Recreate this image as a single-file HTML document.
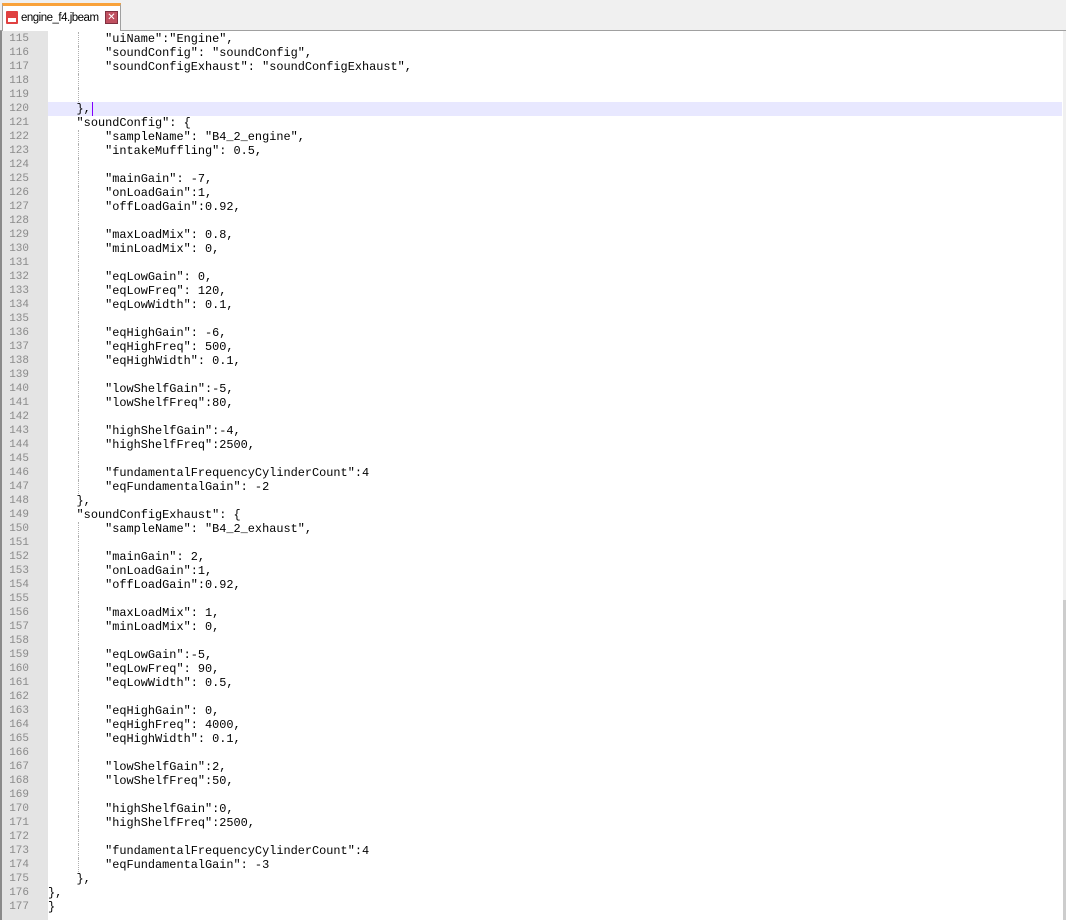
<!DOCTYPE html>
<html><head><meta charset="utf-8"><style>
*{margin:0;padding:0;box-sizing:border-box}
body{width:1066px;height:920px;overflow:hidden;background:#fff;position:relative;font-family:"Liberation Mono",monospace}
#tabbar{position:absolute;left:0;top:0;width:1066px;height:31px;background:#f0f0f0;border-bottom:1px solid #a0a0a0}
#tab{position:absolute;left:2px;top:3px;width:119px;height:28px;background:#fff;border:1px solid #a0a0a0;border-bottom:none;border-top:3px solid #f9a23a;font:11.5px "Liberation Sans",sans-serif;color:#000}
#tab .ic{position:absolute;left:3px;top:5px;width:12px;height:13px;background:#e04040;border-radius:1px}
#tab .ic:after{content:"";position:absolute;left:2px;top:7px;width:8px;height:4px;background:#fff}
#tab .t{position:absolute;left:18px;top:6px;letter-spacing:-0.5px}
#tab .x{position:absolute;left:102px;top:5px;width:13px;height:13px;background:#c05060;color:#fff;font-size:10px;line-height:12px;text-align:center;border:1px solid #803040}
#margin{position:absolute;left:0;top:31px;width:48px;height:889px;background:#e4e4e4;border-left:2px solid #8a8a8a}
#ed{position:absolute;left:0;top:32px;width:1062px}
.l{height:14px;position:relative;font-size:11.9px;line-height:14px;white-space:pre;color:#000}
.n{position:absolute;left:0;width:29px;text-align:right;color:#8a8a8a;font-size:11px}
.c{position:absolute;left:48px;right:0;top:0;height:14px}
.g:before{content:"";position:absolute;left:78px;top:0;height:14px;border-left:1px dotted #b0b0b0}
.hl .c{background:#e8e8ff}
#sb{position:absolute;left:1063px;top:31px;width:3px;height:889px;background:#f0f0f0}
#sb div{position:absolute;left:0;top:569px;width:3px;height:320px;background:#cdcdcd}
</style></head><body>
<div id="tabbar"><div id="tab"><div class="ic"></div><span class="t">engine_f4.jbeam</span><div class="x">✕</div></div></div>
<div id="margin"></div>
<div id="ed">
<div class="l g"><span class="n">115</span><span class="c">        "uiName":"Engine",</span></div>
<div class="l g"><span class="n">116</span><span class="c">        "soundConfig": "soundConfig",</span></div>
<div class="l g"><span class="n">117</span><span class="c">        "soundConfigExhaust": "soundConfigExhaust",</span></div>
<div class="l g"><span class="n">118</span><span class="c"></span></div>
<div class="l g"><span class="n">119</span><span class="c"></span></div>
<div class="l hl"><span class="n">120</span><span class="c">    },<span style="border-left:1px solid #8000ff;margin-left:1px"></span></span></div>
<div class="l"><span class="n">121</span><span class="c">    "soundConfig": {</span></div>
<div class="l g"><span class="n">122</span><span class="c">        "sampleName": "B4_2_engine",</span></div>
<div class="l g"><span class="n">123</span><span class="c">        "intakeMuffling": 0.5,</span></div>
<div class="l g"><span class="n">124</span><span class="c"></span></div>
<div class="l g"><span class="n">125</span><span class="c">        "mainGain": -7,</span></div>
<div class="l g"><span class="n">126</span><span class="c">        "onLoadGain":1,</span></div>
<div class="l g"><span class="n">127</span><span class="c">        "offLoadGain":0.92,</span></div>
<div class="l g"><span class="n">128</span><span class="c"></span></div>
<div class="l g"><span class="n">129</span><span class="c">        "maxLoadMix": 0.8,</span></div>
<div class="l g"><span class="n">130</span><span class="c">        "minLoadMix": 0,</span></div>
<div class="l g"><span class="n">131</span><span class="c"></span></div>
<div class="l g"><span class="n">132</span><span class="c">        "eqLowGain": 0,</span></div>
<div class="l g"><span class="n">133</span><span class="c">        "eqLowFreq": 120,</span></div>
<div class="l g"><span class="n">134</span><span class="c">        "eqLowWidth": 0.1,</span></div>
<div class="l g"><span class="n">135</span><span class="c"></span></div>
<div class="l g"><span class="n">136</span><span class="c">        "eqHighGain": -6,</span></div>
<div class="l g"><span class="n">137</span><span class="c">        "eqHighFreq": 500,</span></div>
<div class="l g"><span class="n">138</span><span class="c">        "eqHighWidth": 0.1,</span></div>
<div class="l g"><span class="n">139</span><span class="c"></span></div>
<div class="l g"><span class="n">140</span><span class="c">        "lowShelfGain":-5,</span></div>
<div class="l g"><span class="n">141</span><span class="c">        "lowShelfFreq":80,</span></div>
<div class="l g"><span class="n">142</span><span class="c"></span></div>
<div class="l g"><span class="n">143</span><span class="c">        "highShelfGain":-4,</span></div>
<div class="l g"><span class="n">144</span><span class="c">        "highShelfFreq":2500,</span></div>
<div class="l g"><span class="n">145</span><span class="c"></span></div>
<div class="l g"><span class="n">146</span><span class="c">        "fundamentalFrequencyCylinderCount":4</span></div>
<div class="l g"><span class="n">147</span><span class="c">        "eqFundamentalGain": -2</span></div>
<div class="l"><span class="n">148</span><span class="c">    },</span></div>
<div class="l"><span class="n">149</span><span class="c">    "soundConfigExhaust": {</span></div>
<div class="l g"><span class="n">150</span><span class="c">        "sampleName": "B4_2_exhaust",</span></div>
<div class="l g"><span class="n">151</span><span class="c"></span></div>
<div class="l g"><span class="n">152</span><span class="c">        "mainGain": 2,</span></div>
<div class="l g"><span class="n">153</span><span class="c">        "onLoadGain":1,</span></div>
<div class="l g"><span class="n">154</span><span class="c">        "offLoadGain":0.92,</span></div>
<div class="l g"><span class="n">155</span><span class="c"></span></div>
<div class="l g"><span class="n">156</span><span class="c">        "maxLoadMix": 1,</span></div>
<div class="l g"><span class="n">157</span><span class="c">        "minLoadMix": 0,</span></div>
<div class="l g"><span class="n">158</span><span class="c"></span></div>
<div class="l g"><span class="n">159</span><span class="c">        "eqLowGain":-5,</span></div>
<div class="l g"><span class="n">160</span><span class="c">        "eqLowFreq": 90,</span></div>
<div class="l g"><span class="n">161</span><span class="c">        "eqLowWidth": 0.5,</span></div>
<div class="l g"><span class="n">162</span><span class="c"></span></div>
<div class="l g"><span class="n">163</span><span class="c">        "eqHighGain": 0,</span></div>
<div class="l g"><span class="n">164</span><span class="c">        "eqHighFreq": 4000,</span></div>
<div class="l g"><span class="n">165</span><span class="c">        "eqHighWidth": 0.1,</span></div>
<div class="l g"><span class="n">166</span><span class="c"></span></div>
<div class="l g"><span class="n">167</span><span class="c">        "lowShelfGain":2,</span></div>
<div class="l g"><span class="n">168</span><span class="c">        "lowShelfFreq":50,</span></div>
<div class="l g"><span class="n">169</span><span class="c"></span></div>
<div class="l g"><span class="n">170</span><span class="c">        "highShelfGain":0,</span></div>
<div class="l g"><span class="n">171</span><span class="c">        "highShelfFreq":2500,</span></div>
<div class="l g"><span class="n">172</span><span class="c"></span></div>
<div class="l g"><span class="n">173</span><span class="c">        "fundamentalFrequencyCylinderCount":4</span></div>
<div class="l g"><span class="n">174</span><span class="c">        "eqFundamentalGain": -3</span></div>
<div class="l"><span class="n">175</span><span class="c">    },</span></div>
<div class="l"><span class="n">176</span><span class="c">},</span></div>
<div class="l"><span class="n">177</span><span class="c">}</span></div>
</div>
<div id="sb"><div></div></div>
</body></html>
